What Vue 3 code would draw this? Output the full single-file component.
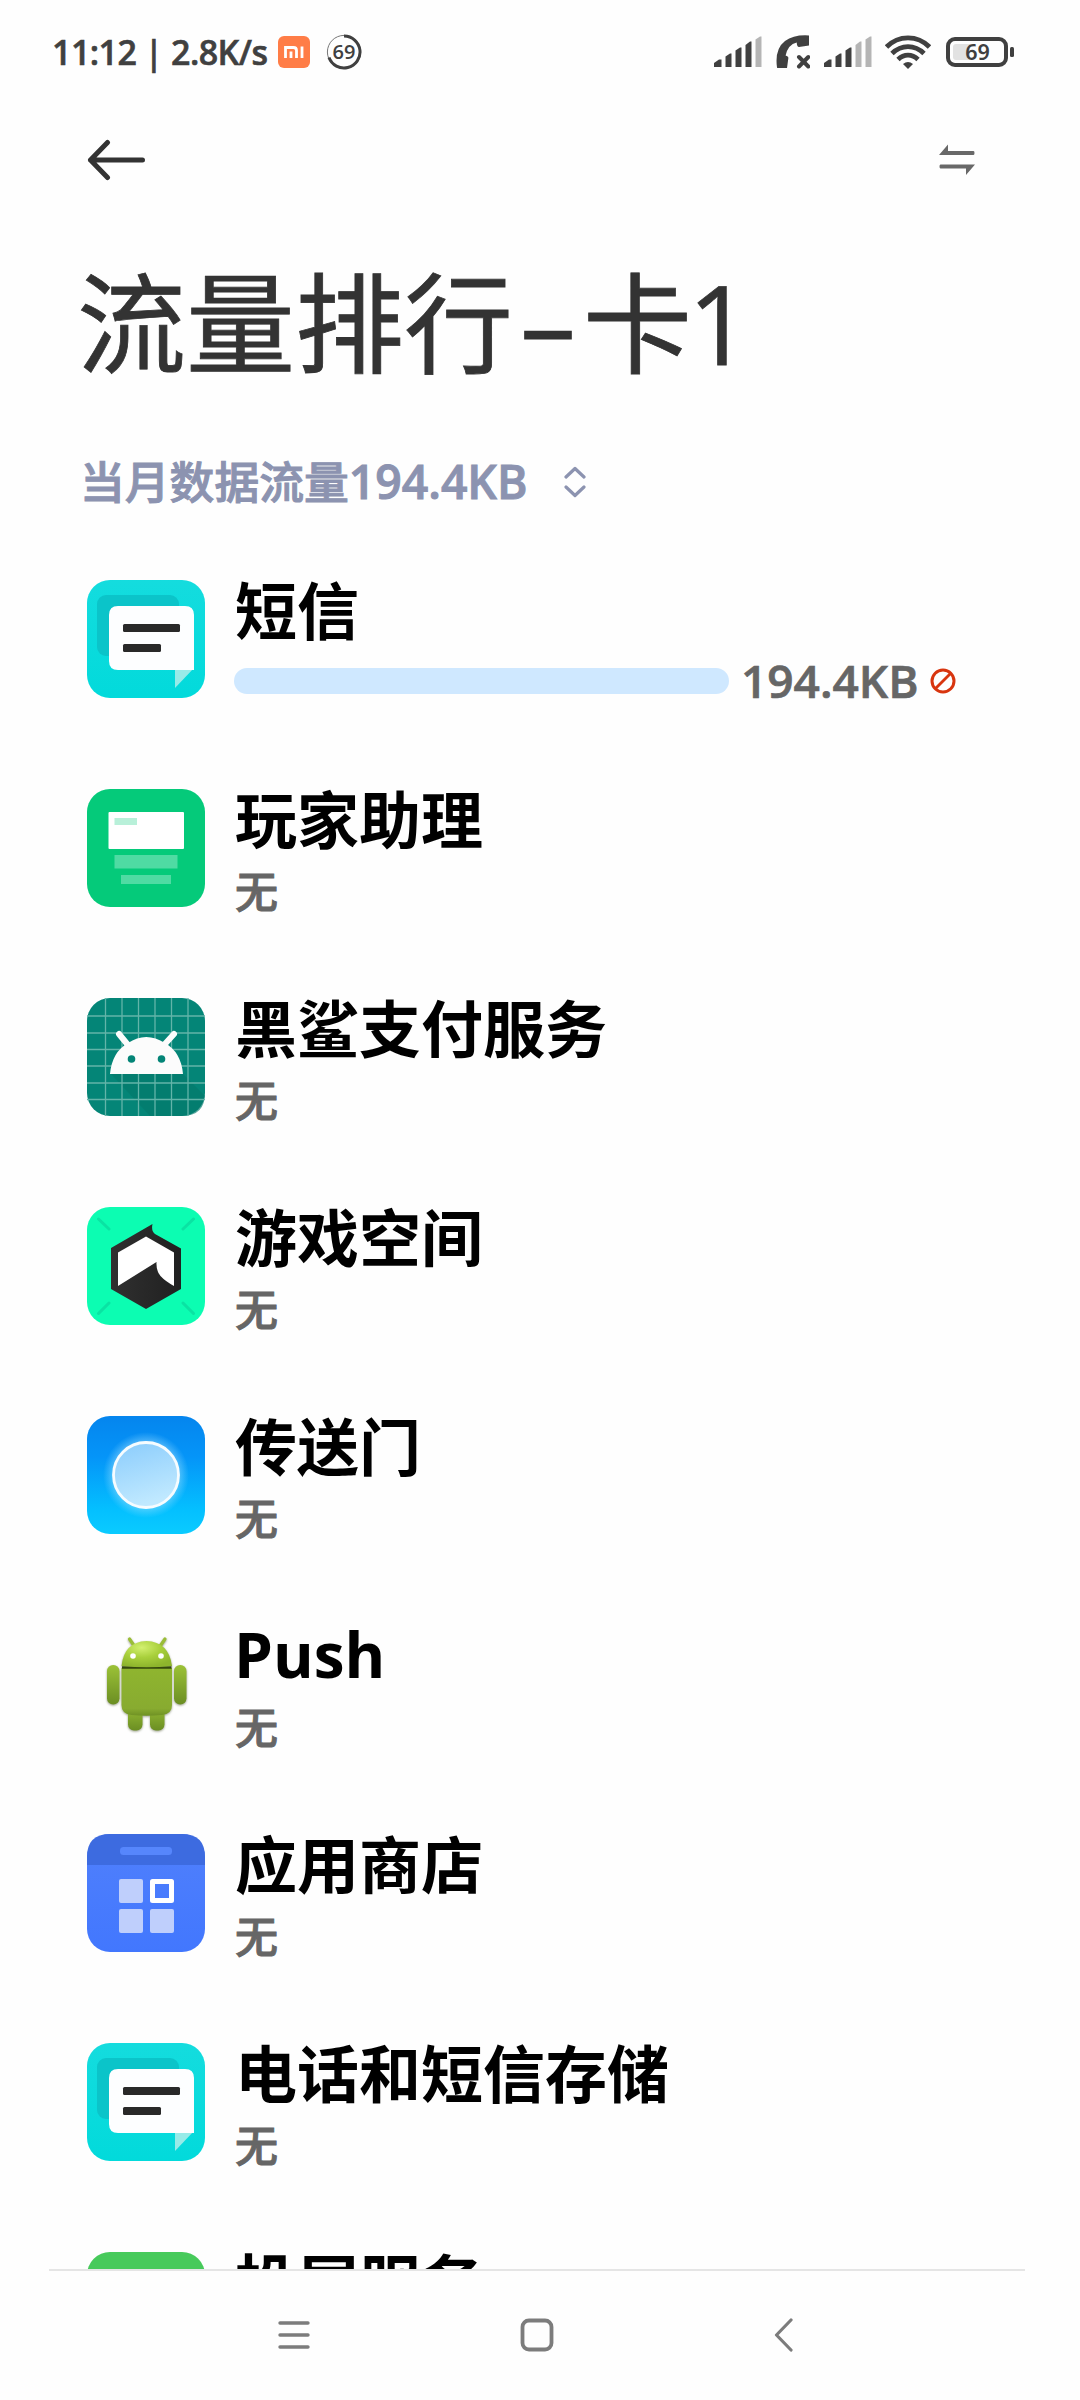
<!-- TrafficRanking.vue -->
<template>
  <div class="screen">
    <div class="status-bar">
      <div class="status-left">
        <span class="clock">11:12 | 2.8K/s</span>
        <svg class="mi" width="32" height="32" viewBox="0 0 32 32">
          <rect width="32" height="32" rx="6" fill="#ff7d47" />
          <path d="M7.5 22V11.5H15.5Q18.5 11.5 18.5 14.5V22M13 15.5V22M24 10.5V22" fill="none" stroke="#fff" stroke-width="2.8" />
        </svg>
        <svg width="36" height="36" viewBox="0 0 36 36">
          <circle cx="18" cy="18" r="16.6" fill="none" stroke="#777" stroke-width="1" />
          <path d="M18 2A16 16 0 1 1 3 23.5" fill="none" stroke="#404040" stroke-width="3" />
          <text x="18" y="25" class="ring-text" text-anchor="middle">69</text>
        </svg>
      </div>
      <div class="status-right">
        <svg v-for="(active, i) in [4, 3]" :key="i" :class="['signal', 'signal-' + i]" width="48" height="32" viewBox="0 0 48 32">
          <path
            v-for="(bar, n) in bars"
            :key="n"
            :d="bar"
            :fill="n < active ? '#404040' : '#b5b5b5'"
          />
        </svg>
        <svg class="phone" width="34" height="34" viewBox="0 0 34 34">
          <path d="M1 32.5Q-1.5 14 9 6Q18 -0.5 33 0.5V10.5L23 12Q21 12 20.7 7.5Q12 9.5 9.6 20.5Q13 21.5 12.3 23.5L11 33H2Q1 33 1 32.5Z" fill="#404040" />
          <path d="M23 22L32.3 31.5M32.3 22L23 31.5" stroke="#404040" stroke-width="4" stroke-linecap="round" />
        </svg>
        <svg class="wifi" width="46" height="34" viewBox="0 0 46 34">
          <g fill="none" stroke="#404040" stroke-width="4.8">
            <path d="M1.5 12Q10.5 2.8 23 2.8T44.5 12" />
            <path d="M7 18.5Q14 11.6 23 11.6T39 18.5" />
            <path d="M13 24.5Q17.5 20.2 23 20.2T33 24.5" />
          </g>
          <path d="M18 29Q23 25 28 29L23 34Z" fill="#404040" />
        </svg>
        <svg width="70" height="30" viewBox="0 0 70 30">
          <rect x="2" y="2" width="58" height="26" rx="7" fill="none" stroke="#404040" stroke-width="4" />
          <path d="M18.5 7H10Q7 7 7 10V20Q7 23 10 23H24V7Z" fill="#e2e2e2" />
          <rect x="64" y="10" width="4" height="10" rx="1.5" fill="#404040" />
          <text x="31.5" y="23.3" class="battery-text" text-anchor="middle">69</text>
        </svg>
      </div>
    </div>

    <div class="toolbar">
      <svg width="60" height="42" viewBox="0 0 60 42">
        <path d="M21.5 3.5L4.5 21L21.5 38.5M4.5 21H56.5" fill="none" stroke="#333" stroke-width="5" stroke-linecap="round" stroke-linejoin="round" />
      </svg>
      <svg width="36" height="32" viewBox="0 0 36 32">
        <path d="M0 11L9 0.5V7H34.5Q35.5 7 35.5 9T34.5 11ZM36 20.5L27 31V24.5H1.5Q0.5 24.5 0.5 22.5T1.5 20.5Z" fill="#686868" />
      </svg>
    </div>

    <h1 class="title">流量排行<span class="dash">-</span>卡<span class="num">1</span></h1>

    <div class="summary">
      <span>当月数据流量<span class="latin">194.4KB</span></span>
      <svg width="22" height="32" viewBox="0 0 22 32">
        <path d="M2 11L11 2.5L20 11M2 21L11 29.5L20 21" fill="none" stroke="#8c93b0" stroke-width="3.2" stroke-linecap="round" stroke-linejoin="round" />
      </svg>
    </div>

    <div class="list">
      <div v-for="app in apps" :key="app.name" class="row">
        <svg class="icon" width="118" height="118" viewBox="0 0 118 118">
          <g v-if="app.icon === 'sms'">
            <rect width="118" height="118" rx="23" fill="url(#smsBg)" />
            <rect x="10" y="15" width="82" height="61" rx="9" fill="#0bc4c9" />
            <path d="M88 88H107L88 108Z" fill="#97ebe8" />
            <path d="M31 26H98Q107 26 107 35V90H31Q22 90 22 81V35Q22 26 31 26Z" fill="#fdfeff" />
            <rect x="36" y="44" width="57" height="8" rx="1.5" fill="#292929" />
            <rect x="36" y="64" width="38" height="8" rx="1.5" fill="#292929" />
          </g>
          <g v-else-if="app.icon === 'helper'">
            <rect width="118" height="118" rx="23" fill="#05ca7a" />
            <rect x="21.5" y="23" width="75.5" height="37" rx="1" fill="#fff" />
            <rect x="27.5" y="29" width="22.5" height="7" fill="#b8f0d9" />
            <rect x="27.5" y="66" width="63" height="13.5" fill="#4fdba3" />
            <rect x="34" y="86" width="50" height="9" fill="#4fdba3" />
          </g>
          <g v-else-if="app.icon === 'robot'">
            <rect width="118" height="118" rx="23" fill="#048577" />
            <path d="M24 76H96L118 98V95Q118 118 95 118H63Z" fill="#037a6c" opacity=".65" />
            <path d="M18.5 0V118M35 0V118M51.5 0V118M68 0V118M84.5 0V118M101 0V118M0 18H118M0 35H118M0 51.5H118M0 68H118M0 85H118M0 101.5H118" stroke="#63b4a9" stroke-width="1.3" />
            <path d="M32 36L41 47M87 36L77 47" stroke="#fcfcfc" stroke-width="6" stroke-linecap="round" />
            <path d="M23 76Q25 54 41 45Q59 33 78 45Q94 54 96 76Z" fill="#fcfcfc" />
            <circle cx="44.5" cy="61" r="3.8" fill="#048577" />
            <circle cx="74.5" cy="61" r="3.8" fill="#048577" />
          </g>
          <g v-else-if="app.icon === 'game'">
            <rect width="118" height="118" rx="23" fill="#0cfdb2" />
            <path d="M11.5 12L22 22M106.5 12L96 22M11.5 106.5L22 96M106.5 106.5L96 96" stroke="#0ae3a3" stroke-width="3" stroke-linecap="round" />
            <path d="M24 41L65.5 17Q64 24 68 27L94 41.5V82L59 102L24 82Z" fill="url(#hexBg)" />
            <path d="M31 45.5L59 29.5L87 45.5V79Q78 74 73.5 69Q69 64 69.5 55L31 79Z" fill="#fff" />
          </g>
          <g v-else-if="app.icon === 'portal'">
            <rect width="118" height="118" rx="23" fill="url(#portalBg)" />
            <circle cx="59" cy="59" r="43" fill="url(#glow)" />
            <circle cx="59" cy="59" r="32.5" fill="url(#portalBall)" stroke="#f6fcff" stroke-width="2.8" />
          </g>
          <g v-else-if="app.icon === 'android'" class="droid">
            <path d="M42.5 14L48 22M78 14L72.5 22" stroke="#9abd37" stroke-width="3.2" stroke-linecap="round" />
            <g fill="url(#arm)">
              <rect x="20" y="40" width="12.5" height="39.5" rx="6.2" />
              <rect x="87" y="40" width="12.5" height="39.5" rx="6.2" />
              <rect x="41" y="78" width="14.5" height="27.5" rx="6" />
              <rect x="63" y="78" width="14.5" height="27.5" rx="6" />
            </g>
            <path d="M34.5 43H85V80Q85 89 75 90Q59 91.5 44.5 90Q34.5 89 34.5 80Z" fill="url(#body)" />
            <path d="M35 42.5H84.5" stroke="#35480d" stroke-width="2.5" />
            <path d="M34.5 41Q37 17 59.5 16Q82 17 85 41Q60 43.5 34.5 41Z" fill="url(#head)" />
            <circle cx="46" cy="31" r="2.8" fill="#fff" />
            <circle cx="74" cy="31" r="2.8" fill="#fff" />
          </g>
          <g v-else-if="app.icon === 'store'">
            <rect width="118" height="118" rx="23" fill="url(#storeBg)" />
            <path d="M0 31V23Q0 0 23 0H95Q118 0 118 23V31Z" fill="#3d6be0" />
            <rect x="33" y="13" width="52" height="8" rx="3.5" fill="#5686fc" />
            <g fill="#bfcffc">
              <rect x="32" y="45" width="24" height="24" rx="2" />
              <rect x="32" y="75" width="24" height="24" rx="2" />
              <rect x="63" y="75" width="24" height="24" rx="2" />
            </g>
            <rect x="65.5" y="47.5" width="19" height="19" fill="none" stroke="#fff" stroke-width="5" stroke-linejoin="round" />
          </g>
          <rect v-else width="118" height="118" rx="23" fill="#47ca5b" />
        </svg>
        <div class="info">
          <div :class="['name', { 'name-latin': app.latin }]">{{ app.name }}</div>
          <div v-if="app.usage" class="usage">
            <div class="bar" :style="{ width: app.percent * 4.95 + 'px' }"></div>
            <span class="amount">{{ app.usage }}</span>
            <svg width="26" height="26" viewBox="0 0 26 26">
              <path d="M5 21L21 5" stroke="#d8350f" stroke-width="2.8" />
              <circle cx="13" cy="13" r="11" fill="none" stroke="#d8350f" stroke-width="3" />
            </svg>
          </div>
          <div v-else-if="app.icon !== 'cast'" class="none">无</div>
        </div>
      </div>
    </div>

    <div class="nav-bar">
      <svg width="32" height="34" viewBox="0 0 32 34">
        <path d="M2 5H30M2 17H30M2 29H30" stroke="#7c7c7c" stroke-width="3.4" stroke-linecap="round" />
      </svg>
      <svg width="34" height="34" viewBox="0 0 34 34">
        <rect x="2.5" y="2.5" width="29" height="29" rx="6.5" fill="none" stroke="#7c7c7c" stroke-width="3.8" />
      </svg>
      <svg width="20" height="34" viewBox="0 0 20 34">
        <path d="M17 2L2.5 17L17 32" fill="none" stroke="#7c7c7c" stroke-width="3.2" stroke-linecap="round" stroke-linejoin="round" />
      </svg>
    </div>

    <!-- shared gradients -->
    <svg class="defs" width="0" height="0">
      <defs>
        <linearGradient id="smsBg" x1="0" y1="0" x2="0" y2="1">
          <stop offset="0" stop-color="#14dcde" />
          <stop offset="1" stop-color="#02dadb" />
        </linearGradient>
        <linearGradient id="hexBg" x1="0" y1="0" x2="1" y2="0">
          <stop offset="0" stop-color="#303030" />
          <stop offset="1" stop-color="#202020" />
        </linearGradient>
        <linearGradient id="portalBg" x1="0" y1="0" x2="0" y2="1">
          <stop offset="0" stop-color="#0585ee" />
          <stop offset=".35" stop-color="#0595f8" />
          <stop offset=".8" stop-color="#04c0ff" />
          <stop offset="1" stop-color="#0acbff" />
        </linearGradient>
        <linearGradient id="portalBall" x1="0" y1="0" x2="0.3" y2="1">
          <stop offset="0" stop-color="#8accfc" />
          <stop offset="1" stop-color="#c0e9ff" />
        </linearGradient>
        <radialGradient id="glow">
          <stop offset=".7" stop-color="#bdeaff" stop-opacity=".55" />
          <stop offset="1" stop-color="#8fdcff" stop-opacity="0" />
        </radialGradient>
        <linearGradient id="storeBg" x1="0" y1="0" x2="0" y2="1">
          <stop offset="0" stop-color="#5080fc" />
          <stop offset="1" stop-color="#4277fe" />
        </linearGradient>
        <linearGradient id="arm" x1="0" y1="0" x2="0" y2="1">
          <stop offset="0" stop-color="#9cc237" />
          <stop offset="1" stop-color="#6b8e23" />
        </linearGradient>
        <linearGradient id="body" x1="0" y1="0" x2="0" y2="1">
          <stop offset="0" stop-color="#8fb52f" />
          <stop offset=".85" stop-color="#88ab30" />
          <stop offset="1" stop-color="#6f9124" />
        </linearGradient>
        <radialGradient id="head" cx=".4" cy=".25" r=".75">
          <stop offset="0" stop-color="#d3f070" />
          <stop offset=".5" stop-color="#a9d03c" />
          <stop offset="1" stop-color="#8db42c" />
        </radialGradient>
      </defs>
    </svg>
  </div>
</template>

<script setup>
import { ref } from 'vue'

const apps = ref([
  { name: '短信', icon: 'sms', usage: '194.4KB', percent: 100 },
  { name: '玩家助理', icon: 'helper' },
  { name: '黑鲨支付服务', icon: 'robot' },
  { name: '游戏空间', icon: 'game' },
  { name: '传送门', icon: 'portal' },
  { name: 'Push', icon: 'android', latin: true },
  { name: '应用商店', icon: 'store' },
  { name: '电话和短信存储', icon: 'sms' },
  { name: '投屏服务', icon: 'cast' }
])

const bars = [
  'M0 31V27L5 23.5H7.5V31Z',
  'M11.5 31V20.5L16 17.5H17.5V31Z',
  'M21.5 31V14.5L26 11.5H27.5V31Z',
  'M31.5 31V9L36 5.5H37.5V31Z',
  'M41.5 31V3.5L46 0.5H47.5V31Z'
]
</script>

<style>
body {
  background-color: #fefefe;
}
</style>

<style scoped>
.screen {
  display: flex;
  flex-direction: column;
  width: 1080px;
  height: 2400px;
  overflow: hidden;
  background-color: #fefefe;
  font-family: 'Open Sans', 'Noto Sans CJK SC', sans-serif;
}

svg {
  display: block;
  flex-shrink: 0;
}

.defs {
  position: absolute;
}

.status-bar {
  display: flex;
  justify-content: space-between;
  align-items: center;
  height: 104px;
  padding: 0 64px 0 52px;
  box-sizing: border-box;
}

.status-left,
.status-right {
  display: flex;
  align-items: center;
}

.clock {
  width: 226px;
  font-size: 34px;
  font-weight: 600;
  line-height: 40px;
  letter-spacing: -0.55px;
  white-space: nowrap;
  color: #404040;
  -webkit-text-stroke: 0.6px #404040;
}

.mi {
  margin-right: 16px;
}

.ring-text {
  font-size: 20px;
  font-weight: 600;
  fill: #404040;
}

.battery-text {
  font-family: 'Noto Sans', sans-serif;
  font-size: 21.5px;
  font-weight: 600;
  fill: #404040;
}

.signal-0 {
  order: 0;
}

.phone {
  order: 1;
  margin: 0 14px;
}

.signal-1 {
  order: 2;
}

.wifi {
  order: 3;
  margin: 0 15px 0 13px;
}

.status-right svg:last-child {
  order: 4;
}

.toolbar {
  display: flex;
  justify-content: space-between;
  align-items: center;
  height: 112px;
  padding: 0 105px 0 86px;
}

.title {
  display: flex;
  align-items: baseline;
  height: 218px;
  margin: 0;
  padding-left: 77px;
  box-sizing: border-box;
  font-family: 'Noto Sans CJK SC', sans-serif;
  font-size: 109px;
  font-weight: 400;
  line-height: 204px;
  white-space: nowrap;
  color: #333;
  -webkit-text-stroke: 0.8px #333;
}

.dash {
  width: 70px;
  text-align: center;
  font-family: 'Open Sans', sans-serif;
  transform: scaleX(1.75);
}

.num {
  font-family: 'Open Sans', sans-serif;
  margin-left: -4px;
}

.summary {
  display: flex;
  align-items: center;
  gap: 37px;
  height: 96px;
  padding-left: 80px;
  font-family: 'Noto Sans CJK SC', sans-serif;
  font-size: 44.8px;
  font-weight: 500;
  line-height: 92px;
  white-space: nowrap;
  color: #8c93b0;
  -webkit-text-stroke: 1px #8c93b0;
}

.summary span {
  height: 96px;
}

.latin {
  font-family: 'Open Sans', sans-serif;
  font-weight: 600;
  font-size: 46.3px;
}

.list {
  height: 1739px;
  overflow: hidden;
}

.row {
  display: flex;
  height: 209px;
  padding: 50px 0 0 87px;
  box-sizing: border-box;
}

.info {
  margin-left: 29px;
}

.name {
  height: 64px;
  margin-top: -4px;
  padding-left: 1px;
  font-family: 'Noto Sans CJK SC', sans-serif;
  font-size: 62px;
  font-weight: 700;
  line-height: 64px;
  white-space: nowrap;
  color: #000;
}

.name-latin {
  padding-left: 0;
  font-family: 'Open Sans', sans-serif;
  line-height: 66px;
}

.none {
  height: 60px;
  margin-top: 10px;
  padding-left: 1px;
  font-family: 'Noto Sans CJK SC', sans-serif;
  font-size: 43px;
  font-weight: 500;
  line-height: 60px;
  color: #666;
  -webkit-text-stroke: 1px #666;
}

.usage {
  display: flex;
  align-items: center;
  height: 60px;
  margin-top: 11px;
}

.bar {
  height: 26px;
  border-radius: 13px;
  background-color: #cfe8ff;
}

.amount {
  width: 189px;
  margin-left: 12px;
  font-size: 46px;
  font-weight: 600;
  line-height: 58px;
  height: 60px;
  color: #666;
  -webkit-text-stroke: 0.7px #666;
}

.nav-bar {
  display: flex;
  align-items: center;
  height: 130px;
  margin: 0 55px 0 49px;
  padding-left: 229px;
  box-sizing: border-box;
  border-top: 2px solid #e5e5e5;
  gap: 210px;
}

.nav-bar svg:last-child {
  margin-left: 10px;
}

.droid {
  filter: drop-shadow(0 1px 1px rgba(60, 70, 30, 0.5));
}
</style>
